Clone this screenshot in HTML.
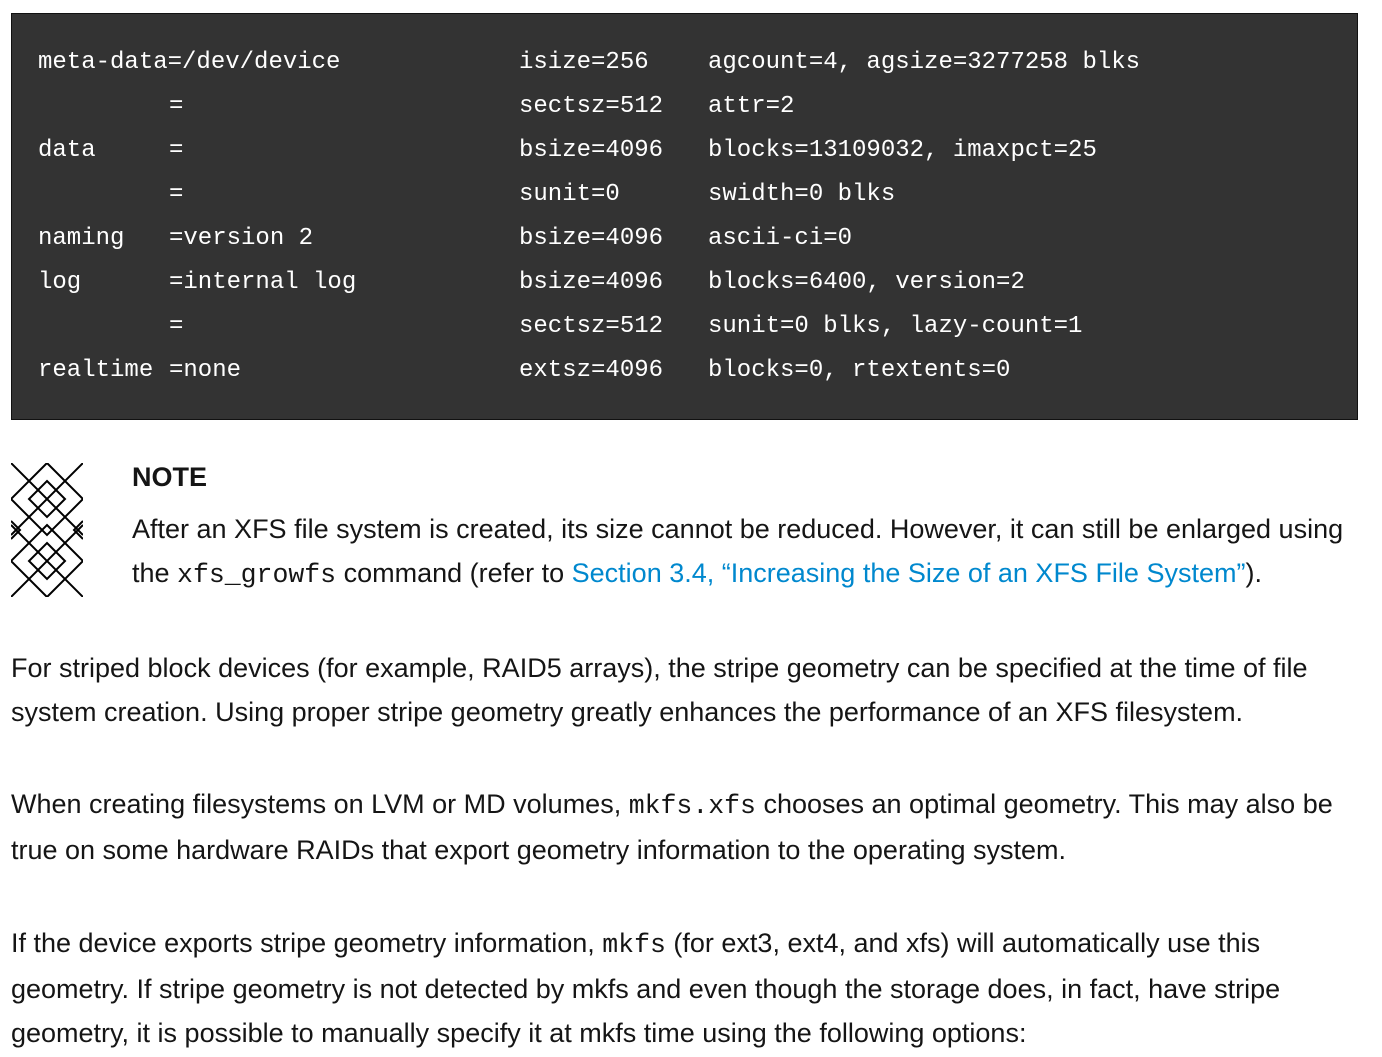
<!DOCTYPE html>
<html><head><meta charset="utf-8"><style>
body{margin:0;background:#fff;width:1382px;height:1057px;overflow:hidden;position:relative;font-family:"Liberation Sans",sans-serif;color:#151515;}
.pre{position:absolute;left:11px;top:13px;width:1345px;height:405px;background:#333;border:1px solid #111;}
.pre div{position:absolute;font-family:"Liberation Mono",monospace;font-size:24px;color:#fff;white-space:pre;line-height:30px;}
.t{position:absolute;white-space:nowrap;font-size:27px;line-height:30px;}
code{font-family:"Liberation Mono",monospace;font-size:26.5px;}
a{color:#0088ce;text-decoration:none;}
</style></head><body>
<div class="pre">
<div style="left:26px;top:34px">meta-data=/dev/device</div><div style="left:507px;top:34px">isize=256</div><div style="left:696px;top:34px">agcount=4, agsize=3277258 blks</div>
<div style="left:157px;top:78px">=</div><div style="left:507px;top:78px">sectsz=512</div><div style="left:696px;top:78px">attr=2</div>
<div style="left:26px;top:122px">data</div><div style="left:157px;top:122px">=</div><div style="left:507px;top:122px">bsize=4096</div><div style="left:696px;top:122px">blocks=13109032, imaxpct=25</div>
<div style="left:157px;top:166px">=</div><div style="left:507px;top:166px">sunit=0</div><div style="left:696px;top:166px">swidth=0 blks</div>
<div style="left:26px;top:210px">naming</div><div style="left:157px;top:210px">=version 2</div><div style="left:507px;top:210px">bsize=4096</div><div style="left:696px;top:210px">ascii-ci=0</div>
<div style="left:26px;top:254px">log</div><div style="left:157px;top:254px">=internal log</div><div style="left:507px;top:254px">bsize=4096</div><div style="left:696px;top:254px">blocks=6400, version=2</div>
<div style="left:157px;top:298px">=</div><div style="left:507px;top:298px">sectsz=512</div><div style="left:696px;top:298px">sunit=0 blks, lazy-count=1</div>
<div style="left:26px;top:342px">realtime</div><div style="left:157px;top:342px">=none</div><div style="left:507px;top:342px">extsz=4096</div><div style="left:696px;top:342px">blocks=0, rtextents=0</div>
</div>
<svg style="position:absolute;left:11px;top:463px" width="72" height="134" viewBox="0 0 72 134" fill="none" stroke="#000" stroke-width="2">
<path d="M0 0L72 72M72 0L0 72M0 62L72 134M72 62L0 134"/>
<path d="M36 0L72 36L36 72L0 36Z"/>
<path d="M36 18L54 36L36 54L18 36Z"/>
<path d="M36 62L72 98L36 134L0 98Z"/>
<path d="M36 80L54 98L36 116L18 98Z"/>
<path d="M0 58L9 67L0 76M72 58L63 67L72 76"/>
</svg>
<div class="t" style="left:132px;top:462px;font-weight:bold;">NOTE</div>
<div class="t" style="left:132px;top:514px">After an XFS file system is created, its size cannot be reduced. However, it can still be enlarged using</div>
<div class="t" style="left:132px;top:558px">the <code>xfs_growfs</code> command (refer to <a>Section 3.4, “Increasing the Size of an XFS File System”</a>).</div>
<div class="t" style="left:11px;top:653px">For striped block devices (for example, RAID5 arrays), the stripe geometry can be specified at the time of file</div>
<div class="t" style="left:11px;top:697px">system creation. Using proper stripe geometry greatly enhances the performance of an XFS filesystem.</div>
<div class="t" style="left:11px;top:789px">When creating filesystems on LVM or MD volumes, <code>mkfs.xfs</code> chooses an optimal geometry. This may also be</div>
<div class="t" style="left:11px;top:835px">true on some hardware RAIDs that export geometry information to the operating system.</div>
<div class="t" style="left:11px;top:928px">If the device exports stripe geometry information, <code>mkfs</code> (for ext3, ext4, and xfs) will automatically use this</div>
<div class="t" style="left:11px;top:974px">geometry. If stripe geometry is not detected by mkfs and even though the storage does, in fact, have stripe</div>
<div class="t" style="left:11px;top:1018px">geometry, it is possible to manually specify it at mkfs time using the following options:</div>
</body></html>
